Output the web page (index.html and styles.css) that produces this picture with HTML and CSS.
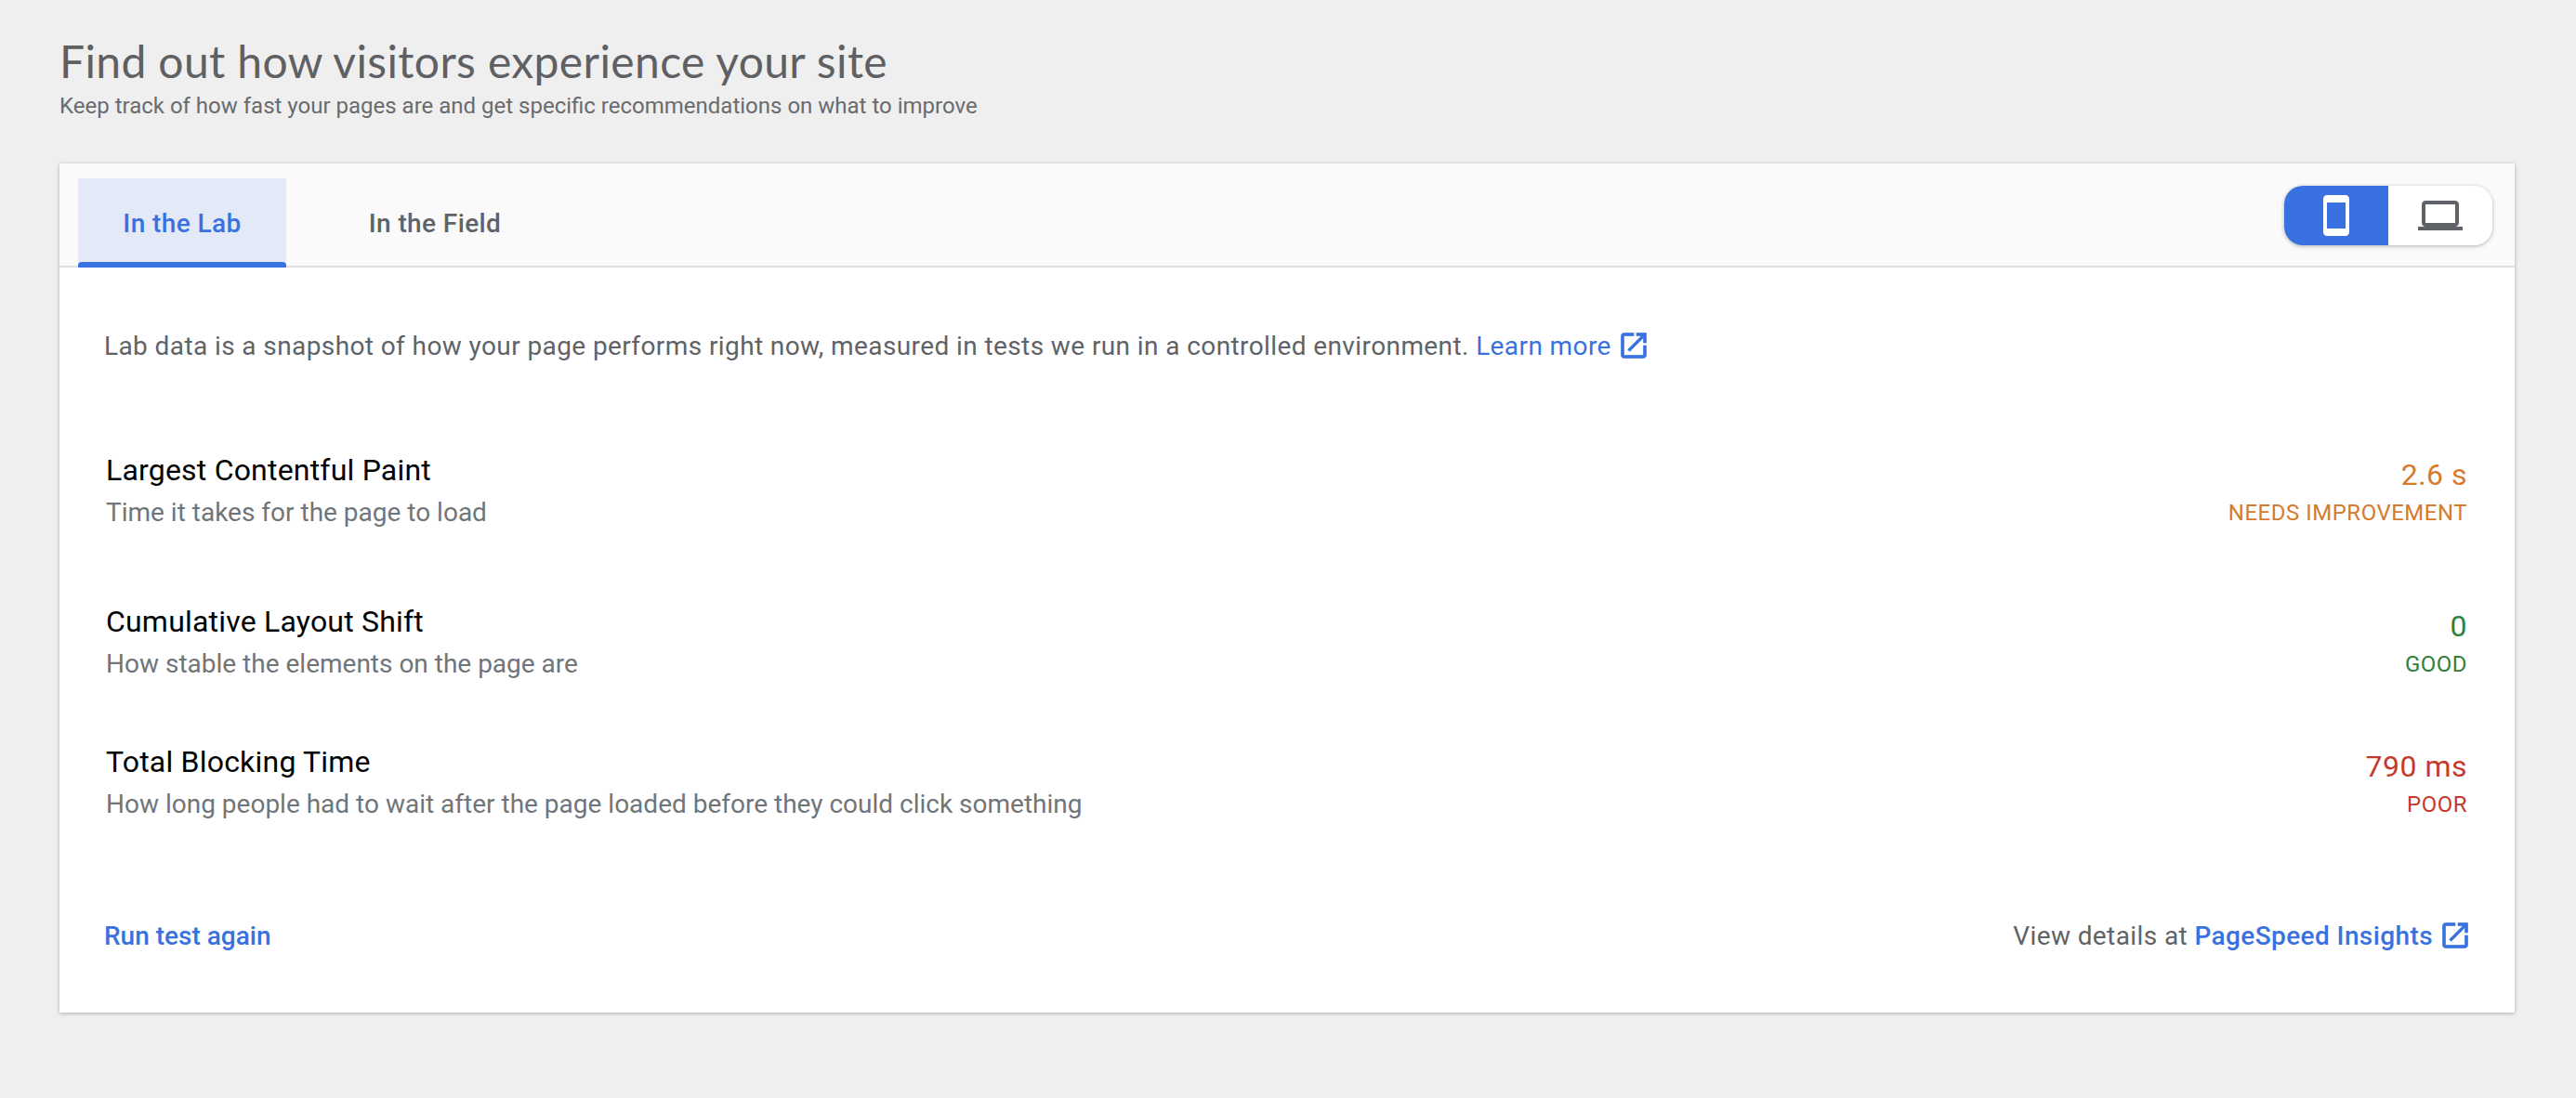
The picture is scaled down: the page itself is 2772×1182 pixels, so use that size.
FILE: index.html
```html
<!DOCTYPE html>
<html lang="en">
<head>
<meta charset="utf-8">
<title>Find out how visitors experience your site</title>
<link rel="stylesheet" href="styles.css">
</head>
<body>
<main class="page">
  <header class="page-head">
    <h1 class="title">Find out how visitors experience your site</h1>
    <p class="subtitle">Keep track of how fast your pages are and get specific recommendations on what to improve</p>
  </header>
  <section class="card">
    <div class="card-head">
      <nav class="tabs">
        <a class="tab tab-active">In the Lab</a>
        <a class="tab">In the Field</a>
      </nav>
      <div class="toggle">
        <button class="toggle-btn toggle-on"><svg class="toggle-icon" viewBox="0 0 24 24"><path d="M17 1.01L7 1c-1.1 0-2 .9-2 2v18c0 1.1.9 2 2 2h10c1.1 0 2-.9 2-2V3c0-1.1-.9-1.99-2-1.99zM17 19H7V5h10v14z"/></svg></button>
        <button class="toggle-btn"><svg class="toggle-icon" viewBox="0 0 24 24"><path d="M20 18c1.1 0 1.99-.9 1.99-2L22 6c0-1.1-.9-2-2-2H4c-1.1 0-2 .9-2 2v10c0 1.1.9 2 2 2H0v2h24v-2h-4zM4 6h16v10H4V6z"/></svg></button>
      </div>
    </div>
    <div class="card-body">
      <p class="intro">Lab data is a snapshot of how your page performs right now, measured in tests we run in a controlled environment. <a class="link link-intro">Learn more<svg class="ext-icon" viewBox="0 0 24 24"><path d="M19 19H5V5h7V3H5c-1.11 0-2 .9-2 2v14c0 1.1.89 2 2 2h14c1.1 0 2-.9 2-2v-7h-2v7zM14 3v2h3.59l-9.83 9.83 1.41 1.41L19 6.41V10h2V3h-7z"/></svg></a></p>
      <div class="metric metric-lcp">
        <div><div class="metric-name">Largest Contentful Paint</div><div class="metric-desc">Time it takes for the page to load</div></div>
        <div class="metric-score warn"><div class="score-value">2.6 s</div><div class="score-label">NEEDS IMPROVEMENT</div></div>
      </div>
      <div class="metric metric-cls">
        <div><div class="metric-name">Cumulative Layout Shift</div><div class="metric-desc">How stable the elements on the page are</div></div>
        <div class="metric-score good"><div class="score-value">0</div><div class="score-label">GOOD</div></div>
      </div>
      <div class="metric metric-tbt">
        <div><div class="metric-name">Total Blocking Time</div><div class="metric-desc">How long people had to wait after the page loaded before they could click something</div></div>
        <div class="metric-score poor"><div class="score-value">790 ms</div><div class="score-label">POOR</div></div>
      </div>
      <footer class="card-foot">
        <a class="link link-strong">Run test again</a>
        <div class="details">View details at <a class="link link-strong">PageSpeed Insights<svg class="ext-icon" viewBox="0 0 24 24"><path d="M19 19H5V5h7V3H5c-1.11 0-2 .9-2 2v14c0 1.1.89 2 2 2h14c1.1 0 2-.9 2-2v-7h-2v7zM14 3v2h3.59l-9.83 9.83 1.41 1.41L19 6.41V10h2V3h-7z"/></svg></a></div>
      </footer>
    </div>
  </section>
</main>
</body>
</html>
```

FILE: styles.css
```css
* { box-sizing: border-box; }
html, body { margin: 0; padding: 0; }
body {
  background: #efefef;
  font-family: Roboto, "Liberation Sans", sans-serif;
  height: 1182px;
  overflow: hidden;
}
.page { padding: 38px 66px 0 64px; }
.page-head { height: 138px; }
.title {
  margin: 0;
  font-family: Lato, "Open Sans", sans-serif;
  font-size: 48px;
  font-weight: 400;
  line-height: 56px;
  letter-spacing: .37px;
  color: #5f6063;
}
.subtitle {
  margin: 4px 0 0;
  font-size: 24px;
  line-height: 32px;
  color: #6a6b6e;
}
.card {
  height: 914px;
  background: #fff;
  box-shadow: 0 1px 4px rgba(0, 0, 0, .28);
  display: flex;
  flex-direction: column;
}
.card-head {
  height: 112px;
  padding: 16px 24px 0 20px;
  background: #fafafa;
  border-bottom: 2px solid #e0e0e0;
  display: flex;
  justify-content: space-between;
  align-items: flex-start;
}
.tabs { display: flex; height: 96px; }
.tab {
  width: 224px;
  height: 96px;
  display: flex;
  align-items: center;
  justify-content: center;
  font-size: 28px;
  font-weight: 500;
  letter-spacing: .4px;
  color: #5f6368;
}
.tab:nth-child(2) { margin-left: 48px; }
.tab-active {
  background: #e3e9f7;
  color: #3a71e0;
  position: relative;
}
.tab-active::after {
  content: "";
  position: absolute;
  left: 0;
  right: 0;
  bottom: 0;
  height: 6px;
  border-radius: 4px 4px 0 0;
  background: #3a71e0;
}
.toggle {
  margin-top: 8px;
  width: 224px;
  height: 64px;
  display: flex;
  background: #fff;
  border-radius: 20px;
  overflow: hidden;
  box-shadow: 0 1px 4px rgba(0, 0, 0, .3);
}
.toggle-btn {
  flex: 1;
  border: 0;
  padding: 0;
  background: #fff;
  display: flex;
  align-items: center;
  justify-content: center;
}
.toggle-on { background: #3a71e0; }
.toggle-icon { width: 48px; height: 48px; fill: #5f6368; }
.toggle-on .toggle-icon { fill: #fff; }
.card-body {
  flex: 1;
  padding: 65px 51px 0 48px;
  display: flex;
  flex-direction: column;
}
.intro {
  margin: 0;
  font-size: 28px;
  line-height: 40px;
  letter-spacing: .4px;
  color: #5f6368;
}
.link { color: #3a71e0; }
.ext-icon {
  width: 36px;
  height: 36px;
  fill: currentColor;
  stroke: currentColor;
  stroke-width: .45;
  vertical-align: -8px;
  margin-left: 6px;
}
.link-strong { font-weight: 500; }
.metric {
  display: flex;
  justify-content: space-between;
  align-items: flex-start;
  padding-left: 2px;
}
.metric-lcp { margin-top: 93px; }
.metric-cls { margin-top: 79px; }
.metric-tbt { margin-top: 67px; }
.metric-name {
  font-size: 32px;
  line-height: 40px;
  letter-spacing: .2px;
  color: #000;
}
.metric-desc {
  margin-top: 8px;
  font-size: 28px;
  line-height: 36px;
  color: #70757a;
}
.metric-score { text-align: right; padding-top: 5px; }
.score-value { font-size: 32px; line-height: 40px; letter-spacing: .5px; }
.score-label { margin-top: 3px; font-size: 24px; line-height: 36px; letter-spacing: .5px; }
.warn { color: #d67a2c; }
.good { color: #2f803b; }
.poor { color: #c6392c; }
.card-foot {
  margin-top: 104px;
  display: flex;
  justify-content: space-between;
  align-items: center;
  font-size: 28px;
  line-height: 40px;
  color: #5f6368;
}
.details { letter-spacing: .4px; }
.details .ext-icon { margin-right: -5px; }
```
